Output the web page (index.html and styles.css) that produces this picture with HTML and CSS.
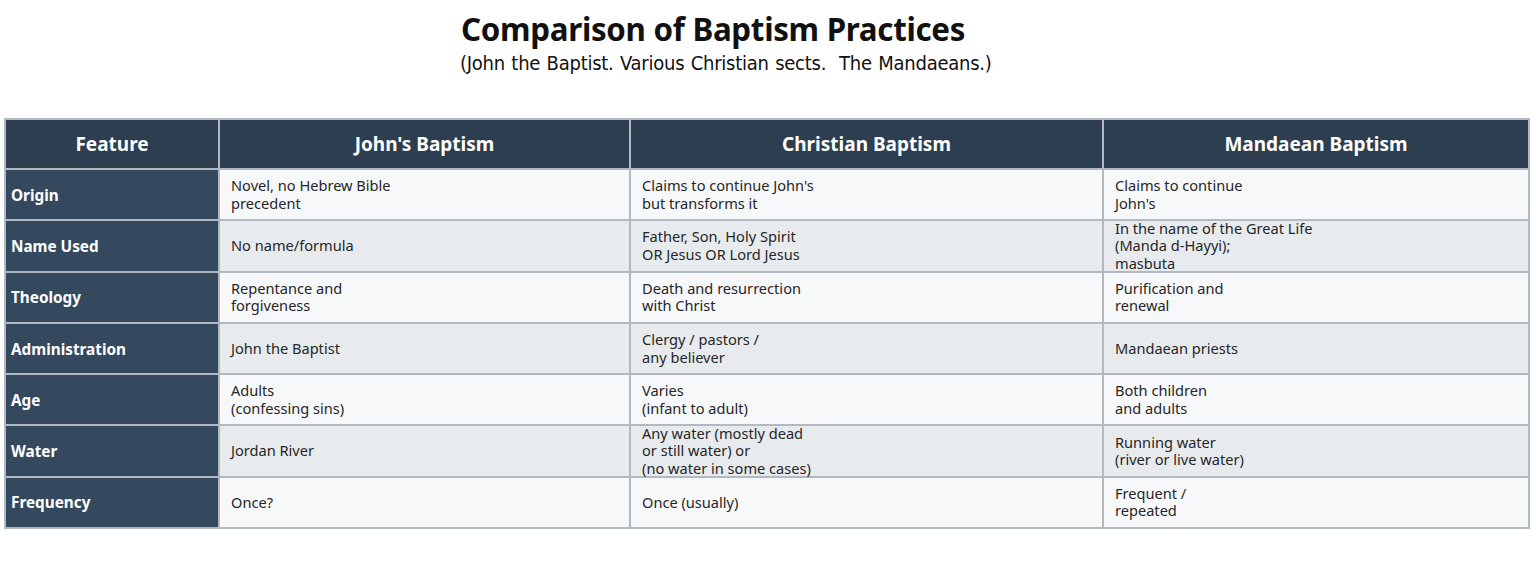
FILE: index.html
```html
<!DOCTYPE html>
<html lang="en">
<head>
<meta charset="utf-8">
<title>Comparison of Baptism Practices</title>
<link rel="stylesheet" href="styles.css">
</head>
<body>
<header class="titles">
  <h1 class="title">Comparison of Baptism Practices</h1>
  <p class="subtitle">(John the Baptist. Various Christian sects.&nbsp; The Mandaeans.)</p>
</header>
<div class="table">
  <div class="th">Feature</div>
  <div class="th">John's Baptism</div>
  <div class="th">Christian Baptism</div>
  <div class="th">Mandaean Baptism</div>

  <div class="feat">Origin</div>
  <div class="cell">Novel, no Hebrew Bible<br>precedent</div>
  <div class="cell">Claims to continue John's<br>but transforms it</div>
  <div class="cell">Claims to continue<br>John's</div>

  <div class="feat">Name Used</div>
  <div class="cell alt">No name/formula</div>
  <div class="cell alt">Father, Son, Holy Spirit<br>OR Jesus OR Lord Jesus</div>
  <div class="cell alt">In the name of the Great Life<br>(Manda d-Hayyi);<br>masbuta</div>

  <div class="feat">Theology</div>
  <div class="cell">Repentance and<br>forgiveness</div>
  <div class="cell">Death and resurrection<br>with Christ</div>
  <div class="cell">Purification and<br>renewal</div>

  <div class="feat">Administration</div>
  <div class="cell alt">John the Baptist</div>
  <div class="cell alt">Clergy / pastors /<br>any believer</div>
  <div class="cell alt">Mandaean priests</div>

  <div class="feat">Age</div>
  <div class="cell">Adults<br>(confessing sins)</div>
  <div class="cell">Varies<br>(infant to adult)</div>
  <div class="cell">Both children<br>and adults</div>

  <div class="feat">Water</div>
  <div class="cell alt">Jordan River</div>
  <div class="cell alt">Any water (mostly dead<br>or still water) or<br>(no water in some cases)</div>
  <div class="cell alt">Running water<br>(river or live water)</div>

  <div class="feat">Frequency</div>
  <div class="cell">Once?</div>
  <div class="cell">Once (usually)</div>
  <div class="cell">Frequent /<br>repeated</div>
</div>
</body>
</html>
```
FILE: styles.css
```css
html, body {
  margin: 0;
  padding: 0;
  background: #ffffff;
}

body {
  font-family: "Noto Sans", "Open Sans", sans-serif;
  color: #2b2b2b;
}

.titles {
  padding: 9px 0 0 461px;
  height: 110px;
  box-sizing: border-box;
}

.title {
  margin: 0;
  font-family: "Noto Sans", sans-serif;
  font-weight: 700;
  font-size: 31.3px;
  line-height: 40px;
  color: #111111;
  letter-spacing: -0.3px;
}

.subtitle {
  margin: 1px 0 0 -1px;
  font-family: "DejaVu Sans Condensed", "DejaVu Sans", sans-serif;
  font-size: 20px;
  line-height: 26px;
  color: #111111;
  letter-spacing: -0.25px;
  word-spacing: 1px;
}

.table {
  margin: 8px 0 0 4px;
  width: 1526px;
  display: grid;
  grid-template-columns: 212px 409px 471px 1fr;
  grid-template-rows: 48px repeat(7, 49.3px);
  gap: 2px;
  padding: 2px;
  box-sizing: border-box;
  background: #b3b9c0;
}

.th {
  background: #2d3e50;
  color: #ffffff;
  font-weight: 700;
  font-size: 19px;
  display: flex;
  align-items: center;
  justify-content: center;
}

.feat {
  background: #34485e;
  color: #ffffff;
  font-weight: 700;
  font-size: 15.3px;
  display: flex;
  align-items: center;
  padding-left: 5px;
}

.cell {
  background: #f7f8fa;
  font-size: 14.6px;
  line-height: 17.5px;
  color: #262626;
  display: flex;
  align-items: center;
  padding-left: 11px;
}

.cell.alt {
  background: #e8ebee;
}
```
